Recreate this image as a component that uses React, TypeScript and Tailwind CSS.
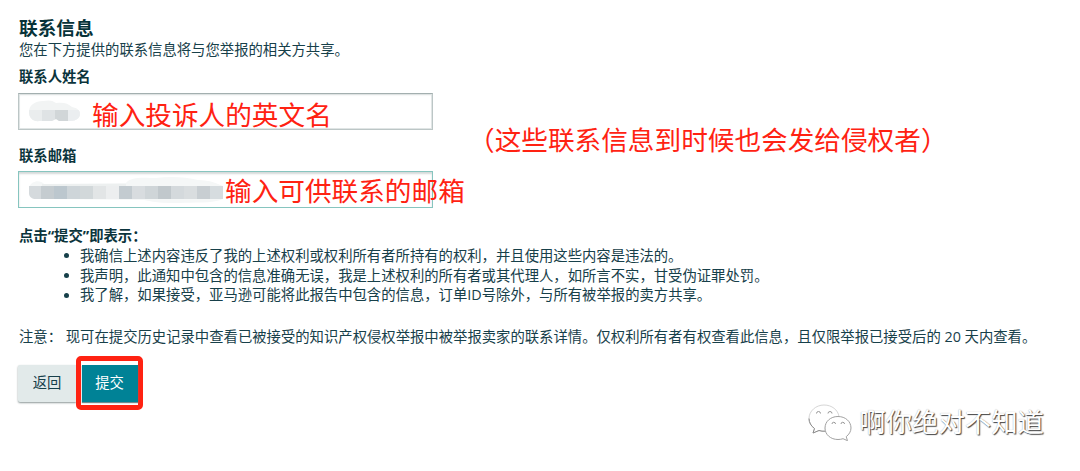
import type { ReactNode } from 'react'

const terms = [
  '我确信上述内容违反了我的上述权利或权利所有者所持有的权利，并且使用这些内容是违法的。',
  '我声明，此通知中包含的信息准确无误，我是上述权利的所有者或其代理人，如所言不实，甘受伪证罪处罚。',
  '我了解，如果接受，亚马逊可能将此报告中包含的信息，订单ID号除外，与所有被举报的卖方共享。',
]

const emailBlocks = [
  '#d5dadd', '#c5ccd0', '#bcc7ce', '#ced5d9', '#d2d8da', '#e2e5e6', '#eceeef',
  '#c3cbd0', '#d8dcdf', '#cfd5d8', '#c1c8cc', '#d4d9dc', '#d9dddf', '#c8ced2', '#d6dcdf',
]

function Note({ children }: { children: ReactNode }) {
  return (
    <span className="whitespace-nowrap text-[26.650px] leading-[36px] text-[#ff2212]">
      {children}
    </span>
  )
}

function NameMask() {
  return (
    <svg className="shrink-0" width="54" height="24" viewBox="0 0 54 24">
      <clipPath id="name-mask">
        <path d="M1 12C1 5 7 1 15 1c6-1 9-1 13 2 7-1 12 0 16 4 5 1 8 3 8 7s-4 7-9 7H31l-3-2-4 2H12C5 22 1 18 1 12z" />
      </clipPath>
      <g clipPath="url(#name-mask)">
        <rect width="54" height="24" fill="#f2f4f4" />
        <rect y="10" width="14" height="14" fill="#eaedee" />
        <rect x="14" y="10" width="13" height="12" fill="#dfe3e5" />
        <rect x="27" y="10" width="13" height="12" fill="#d1d6d8" />
        <rect x="40" y="10" width="14" height="12" fill="#ebeef0" />
      </g>
    </svg>
  )
}

function EmailMask() {
  return (
    <svg className="shrink-0" width="195" height="28" viewBox="0 0 195 28">
      <path
        d="M1 11C3 5 12 3 16 8l82-1c5-7 20-5 30-5 14-2 30-1 42 2 12 0 20 4 25 6v13c-10 5-31 3-43 4-12 0-24 0-36-3L8 23z"
        fill="#f5f7f7"
      />
      <rect x="14" y="8" width="84" height="4" fill="#edf0f0" />
      <clipPath id="email-mask">
        <path d="M1 10h194v13H8c-4 0-7-2-7-6z" />
      </clipPath>
      <g clipPath="url(#email-mask)">
        {emailBlocks.map((fill, i) => (
          <rect key={i} x={i * 13} y="10" width="13" height="13" fill={fill} />
        ))}
      </g>
    </svg>
  )
}

function WeChatMark() {
  return (
    <svg width="44" height="37" viewBox="0 0 44 37" fill="white" strokeLinejoin="round">
      <path
        d="M16 1C8 1 1 7 1 14.500c0 4 2 7.500 5.500 10L5 29l6-2.500c2 .6 4 .8 6.500.7C16 20 22 12.500 31 12.500C30 6 24 1 16 1z"
        stroke="#d6d6d6"
      />
      <path d="M1 14.500c0 4 2 7.500 5.500 10L5 29l6-2.500q3 1 6 .7" fill="none" stroke="#8c8c8c" />
      <path
        d="M30 12.500c-7.500 0-13 5-13 11.500s5.500 11.500 13 11.500c2 0 3.500-.3 5-.8l4.500 2-1.300-4C41 30.500 43 27.500 43 24c0-6.500-5.500-11.500-13-11.500z"
        stroke="#a2a2a2"
      />
      <g fill="none" stroke="#999">
        <path d="M8.500 9.500a2 2 0 0 1 4 0M20 9.500a2 2 0 0 1 4 0" />
        <path d="M24 20a1.700 1.700 0 0 1 3.500 0M33 20a1.700 1.700 0 0 1 3.500 0" />
      </g>
    </svg>
  )
}

export default function App() {
  return (
    <div className="relative flex h-[471px] w-[1080px] flex-col overflow-hidden bg-white px-[18px] pt-4 font-['Open_Sans','Noto_Sans_CJK_SC',sans-serif] text-[14.350px] leading-5 text-[#17404a]">
      <header className="pl-px">
        <h1 className="text-[18.700px] font-bold leading-6 text-[#063238]">联系信息</h1>
        <p>您在下方提供的联系信息将与您举报的相关方共享。</p>
      </header>

      <div className="flex items-center gap-[35px] pt-[7px]">
        <div className="flex w-[415px] flex-col gap-4">
          <div className="flex flex-col gap-1.5">
            <label className="pl-px font-bold text-[#0b343c]">联系人姓名</label>
            <div className="flex h-[37px] items-center gap-[10px] whitespace-nowrap border-[1.500px] border-[#bcc6c6] border-t-[#a3afaf] pl-[9px] shadow-[inset_0_1px_2px_#dfe3e3,inset_0_0_0_1px_#e0e5e5]">
              <NameMask />
              <span className="pt-1.5">
                <Note>输入投诉人的英文名</Note>
              </span>
            </div>
          </div>
          <div className="flex flex-col gap-[5px]">
            <label className="pl-px font-bold text-[#0b343c]">联系邮箱</label>
            <div className="flex h-[37px] items-center gap-[2px] whitespace-nowrap border border-[#86c5bf] pl-[9px] shadow-[inset_0_2px_2px_#d5dada]">
              <EmailMask />
              <span className="pt-0.5">
                <Note>输入可供联系的邮箱</Note>
              </span>
            </div>
          </div>
        </div>
        <span className="pt-1">
          <Note>（这些联系信息到时候也会发给侵权者）</Note>
        </span>
      </div>

      <section className="pl-px pt-[18px]">
        <h2 className="font-bold text-[#0b343c]">点击“提交”即表示：</h2>
        <ul className="leading-[19.700px]">
          {terms.map((term) => (
            <li key={term} className="flex items-center gap-[11px] whitespace-nowrap pl-[45px]">
              <span className="size-[5px] rounded-full bg-[#17404a]" />
              {term}
            </li>
          ))}
        </ul>
      </section>

      <p className="whitespace-nowrap pl-px pt-[22px]">
        注意：&nbsp;现可在提交历史记录中查看已被接受的知识产权侵权举报中被举报卖家的联系详情。仅权利所有者有权查看此信息，且仅限举报已接受后的 20 天内查看。
      </p>

      <div className="flex items-center pt-[9px]">
        <button
          type="button"
          className="h-[37px] w-[58px] rounded-l-[2px] bg-[#e2eaea] shadow-[0_1px_2px_#8d9999]"
        >
          返回
        </button>
        <div className="flex h-[54px] w-[67px] items-center justify-center rounded-[5px] border-[5px] border-[#ff2212] bg-white">
          <button
            type="button"
            className="h-[37px] w-[56px] shrink-0 bg-[#008296] text-white shadow-[0_1px_1px_#6f8a8f]"
          >
            提交
          </button>
        </div>
      </div>

      {/* watermark */}
      <div className="absolute bottom-[30px] right-[36px] flex items-center gap-[7px]">
        <WeChatMark />
        <span className="text-[26.400px] leading-[38px] text-white [text-shadow:1px_1px_1px_#444,0_0_1px_#aaa]">
          啊你绝对不知道
        </span>
      </div>
    </div>
  )
}
